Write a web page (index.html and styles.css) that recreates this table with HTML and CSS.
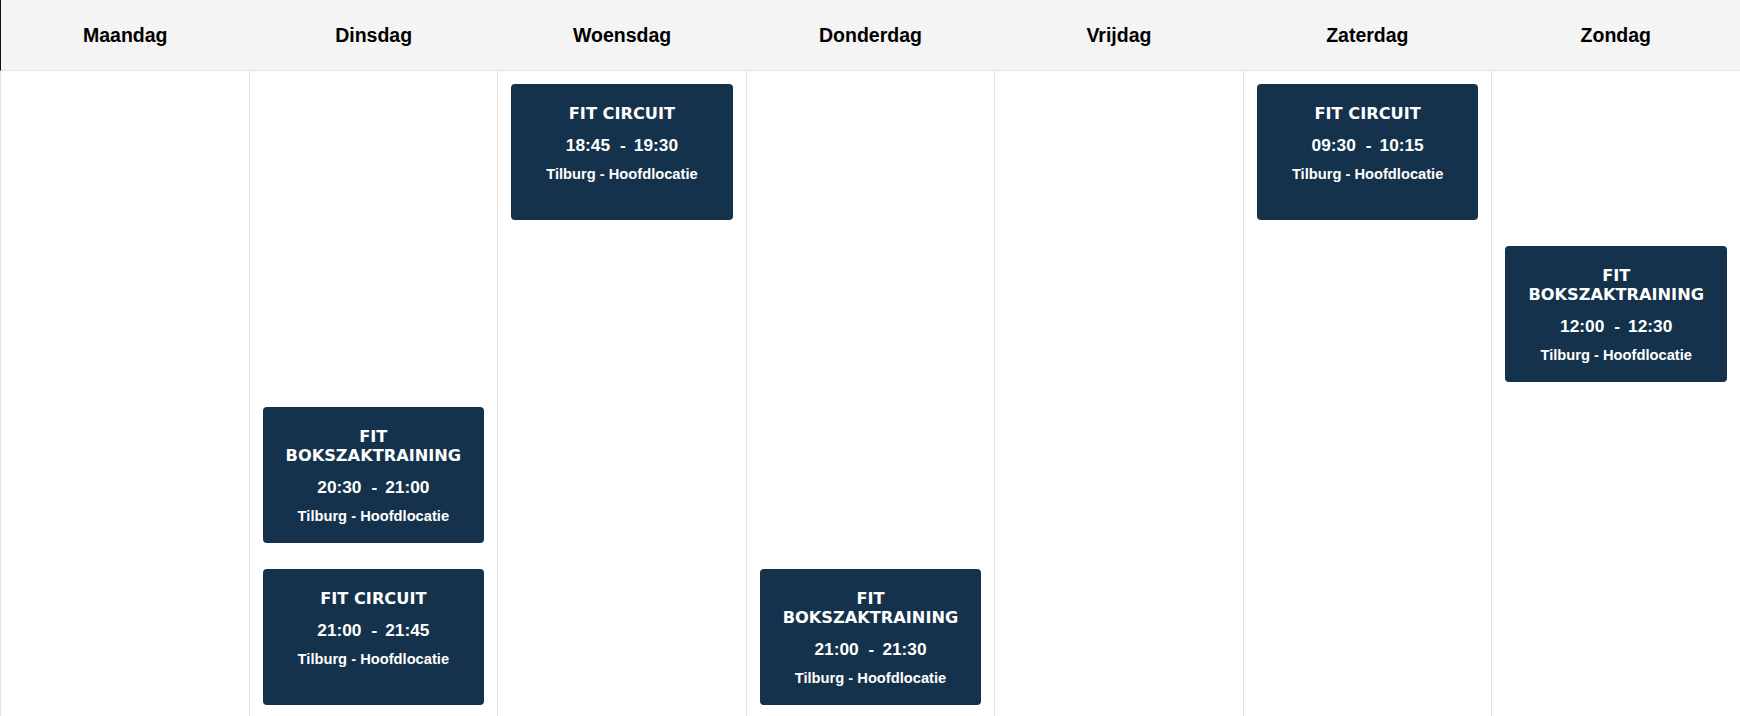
FILE: index.html
```html
<!DOCTYPE html>
<html lang="nl">
<head>
<meta charset="utf-8">
<title>Rooster</title>
<link rel="stylesheet" href="styles.css">
</head>
<body>
<div class="schedule">
  <div class="head">
    <div class="day-name">Maandag</div>
    <div class="day-name">Dinsdag</div>
    <div class="day-name">Woensdag</div>
    <div class="day-name">Donderdag</div>
    <div class="day-name">Vrijdag</div>
    <div class="day-name">Zaterdag</div>
    <div class="day-name">Zondag</div>
  </div>
  <div class="body">
    <div class="col"></div>
    <div class="col">
      <div class="slot"></div>
      <div class="slot"></div>
      <div class="slot">
        <div class="card">
          <div class="title">FIT BOKSZAKTRAINING</div>
          <div class="time">20:30<span class="dash">-</span>21:00</div>
          <div class="loc">Tilburg - Hoofdlocatie</div>
        </div>
      </div>
      <div class="slot">
        <div class="card">
          <div class="title">FIT CIRCUIT</div>
          <div class="time">21:00<span class="dash">-</span>21:45</div>
          <div class="loc">Tilburg - Hoofdlocatie</div>
        </div>
      </div>
    </div>
    <div class="col">
      <div class="slot">
        <div class="card">
          <div class="title">FIT CIRCUIT</div>
          <div class="time">18:45<span class="dash">-</span>19:30</div>
          <div class="loc">Tilburg - Hoofdlocatie</div>
        </div>
      </div>
    </div>
    <div class="col">
      <div class="slot"></div>
      <div class="slot"></div>
      <div class="slot"></div>
      <div class="slot">
        <div class="card">
          <div class="title">FIT BOKSZAKTRAINING</div>
          <div class="time">21:00<span class="dash">-</span>21:30</div>
          <div class="loc">Tilburg - Hoofdlocatie</div>
        </div>
      </div>
    </div>
    <div class="col"></div>
    <div class="col">
      <div class="slot">
        <div class="card">
          <div class="title">FIT CIRCUIT</div>
          <div class="time">09:30<span class="dash">-</span>10:15</div>
          <div class="loc">Tilburg - Hoofdlocatie</div>
        </div>
      </div>
    </div>
    <div class="col">
      <div class="slot"></div>
      <div class="slot">
        <div class="card">
          <div class="title">FIT BOKSZAKTRAINING</div>
          <div class="time">12:00<span class="dash">-</span>12:30</div>
          <div class="loc">Tilburg - Hoofdlocatie</div>
        </div>
      </div>
    </div>
  </div>
</div>
</body>
</html>
```
FILE: styles.css
```css
html, body {
  margin: 0;
  padding: 0;
  background: #ffffff;
  overflow: hidden;
}

body {
  font-family: "Liberation Sans", Arial, sans-serif;
  height: 716px;
}

.schedule {
  display: flex;
  flex-direction: column;
  height: 716px;
  overflow: hidden;
}

.head {
  flex: none;
  display: grid;
  grid-template-columns: repeat(7, 1fr);
  height: 70px;
  background: #f4f4f4;
  border-bottom: 1px solid #e3e3e3;
  border-left: 1px solid #111111;
}

.day-name {
  display: flex;
  align-items: center;
  justify-content: center;
  font-size: 19.5px;
  font-weight: 700;
  color: #000000;
  padding-top: 1px;
}

.body {
  flex: 1 0 auto;
  display: grid;
  grid-template-columns: repeat(7, 1fr);
}

.col {
  border-left: 1px solid #e3e3e3;
  display: flex;
  flex-direction: column;
  min-width: 0;
}

.slot {
  height: 161.5px;
  box-sizing: border-box;
  padding: 13px 13px 12.5px 13px;
  flex: none;
}

.card {
  height: 136px;
  box-sizing: border-box;
  background: #14324b;
  border-radius: 4px;
  color: #ffffff;
  text-align: center;
  padding: 20px 10px 0 10px;
}

.title {
  font-family: "DejaVu Sans", "Liberation Sans", sans-serif;
  font-weight: 700;
  font-size: 16.2px;
  line-height: 19px;
}

.time {
  font-weight: 700;
  font-size: 17.3px;
  line-height: 20px;
  margin-top: 12px;
}

.dash {
  margin: 0 8px 0 10px;
}

.loc {
  font-weight: 700;
  font-size: 14.7px;
  line-height: 18px;
  margin-top: 10px;
}
```
